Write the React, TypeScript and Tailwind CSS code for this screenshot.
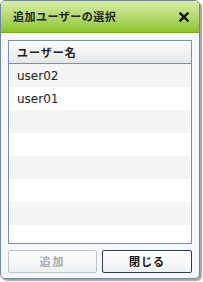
export default function App() {
  const users = ["user02", "user01", "", "", "", "", "", ""];

  return (
    <div className="w-[203px] h-[282px] bg-white" style={{ fontFamily: '"DejaVu Sans", "Noto Sans CJK JP", sans-serif' }}>
      <div className="w-[200px] h-[279px] rounded-[5px] border border-[#6f87a7] bg-[#f4f7fc] shadow-[2px_2px_1px_rgba(0,0,0,0.35)] overflow-hidden flex flex-col">
        {/* Title bar */}
        <div className="h-[32px] shrink-0 flex items-center justify-between pl-[12px] pr-[10px] bg-gradient-to-b from-[#d9eea8] to-[#8fc421] border-b border-[#7bab1c]">
          <span className="text-[11px] font-bold text-[#222] tracking-[0.5px]" style={{ fontFamily: '"Noto Sans CJK JP", sans-serif' }}>
            追加ユーザーの選択
          </span>
          <svg width="10" height="10" viewBox="0 0 10 10" className="mt-[1px]">
            <path d="M1.5 1.5 L8.5 8.5 M8.5 1.5 L1.5 8.5" stroke="#111" strokeWidth="2.4" strokeLinecap="square" />
          </svg>
        </div>

        {/* Body */}
        <div className="flex flex-col px-[7px] pt-[7px]">
          <div className="h-[204px] border border-[#7a8fab] bg-white overflow-hidden flex flex-col">
            <div className="h-[23px] shrink-0 flex items-center pl-[8px] bg-gradient-to-b from-white to-[#e6e6e6] border-b border-[#7a8fab]">
              <span className="text-[11px] font-bold text-[#222] tracking-[1px]" style={{ fontFamily: '"Noto Sans CJK JP", sans-serif' }}>
                ユーザー名
              </span>
            </div>
            {users.map((u, i) => (
              <div
                key={i}
                className={`h-[23px] shrink-0 flex items-center pl-[8px] text-[12px] text-[#222] ${i % 2 === 0 ? "bg-[#f5f5f5]" : "bg-white"}`}
              >
                {u}
              </div>
            ))}
          </div>

          <div className="flex gap-[5px] mt-[6px]">
            <button
              disabled
              className="w-[89px] h-[23px] rounded-[2px] border border-[#bcc4cc] bg-gradient-to-b from-white to-[#eef0f2] text-[11px] font-bold text-[#a8a8a8] tracking-[2px]"
              style={{ fontFamily: '"Noto Sans CJK JP", sans-serif' }}
            >
              追加
            </button>
            <button
              className="w-[90px] h-[23px] rounded-[2px] border border-[#2f3d4e] bg-gradient-to-b from-white to-[#eef0f2] text-[11px] font-bold text-[#111] tracking-[1px]"
              style={{ fontFamily: '"Noto Sans CJK JP", sans-serif' }}
            >
              閉じる
            </button>
          </div>
        </div>
      </div>
    </div>
  );
}
